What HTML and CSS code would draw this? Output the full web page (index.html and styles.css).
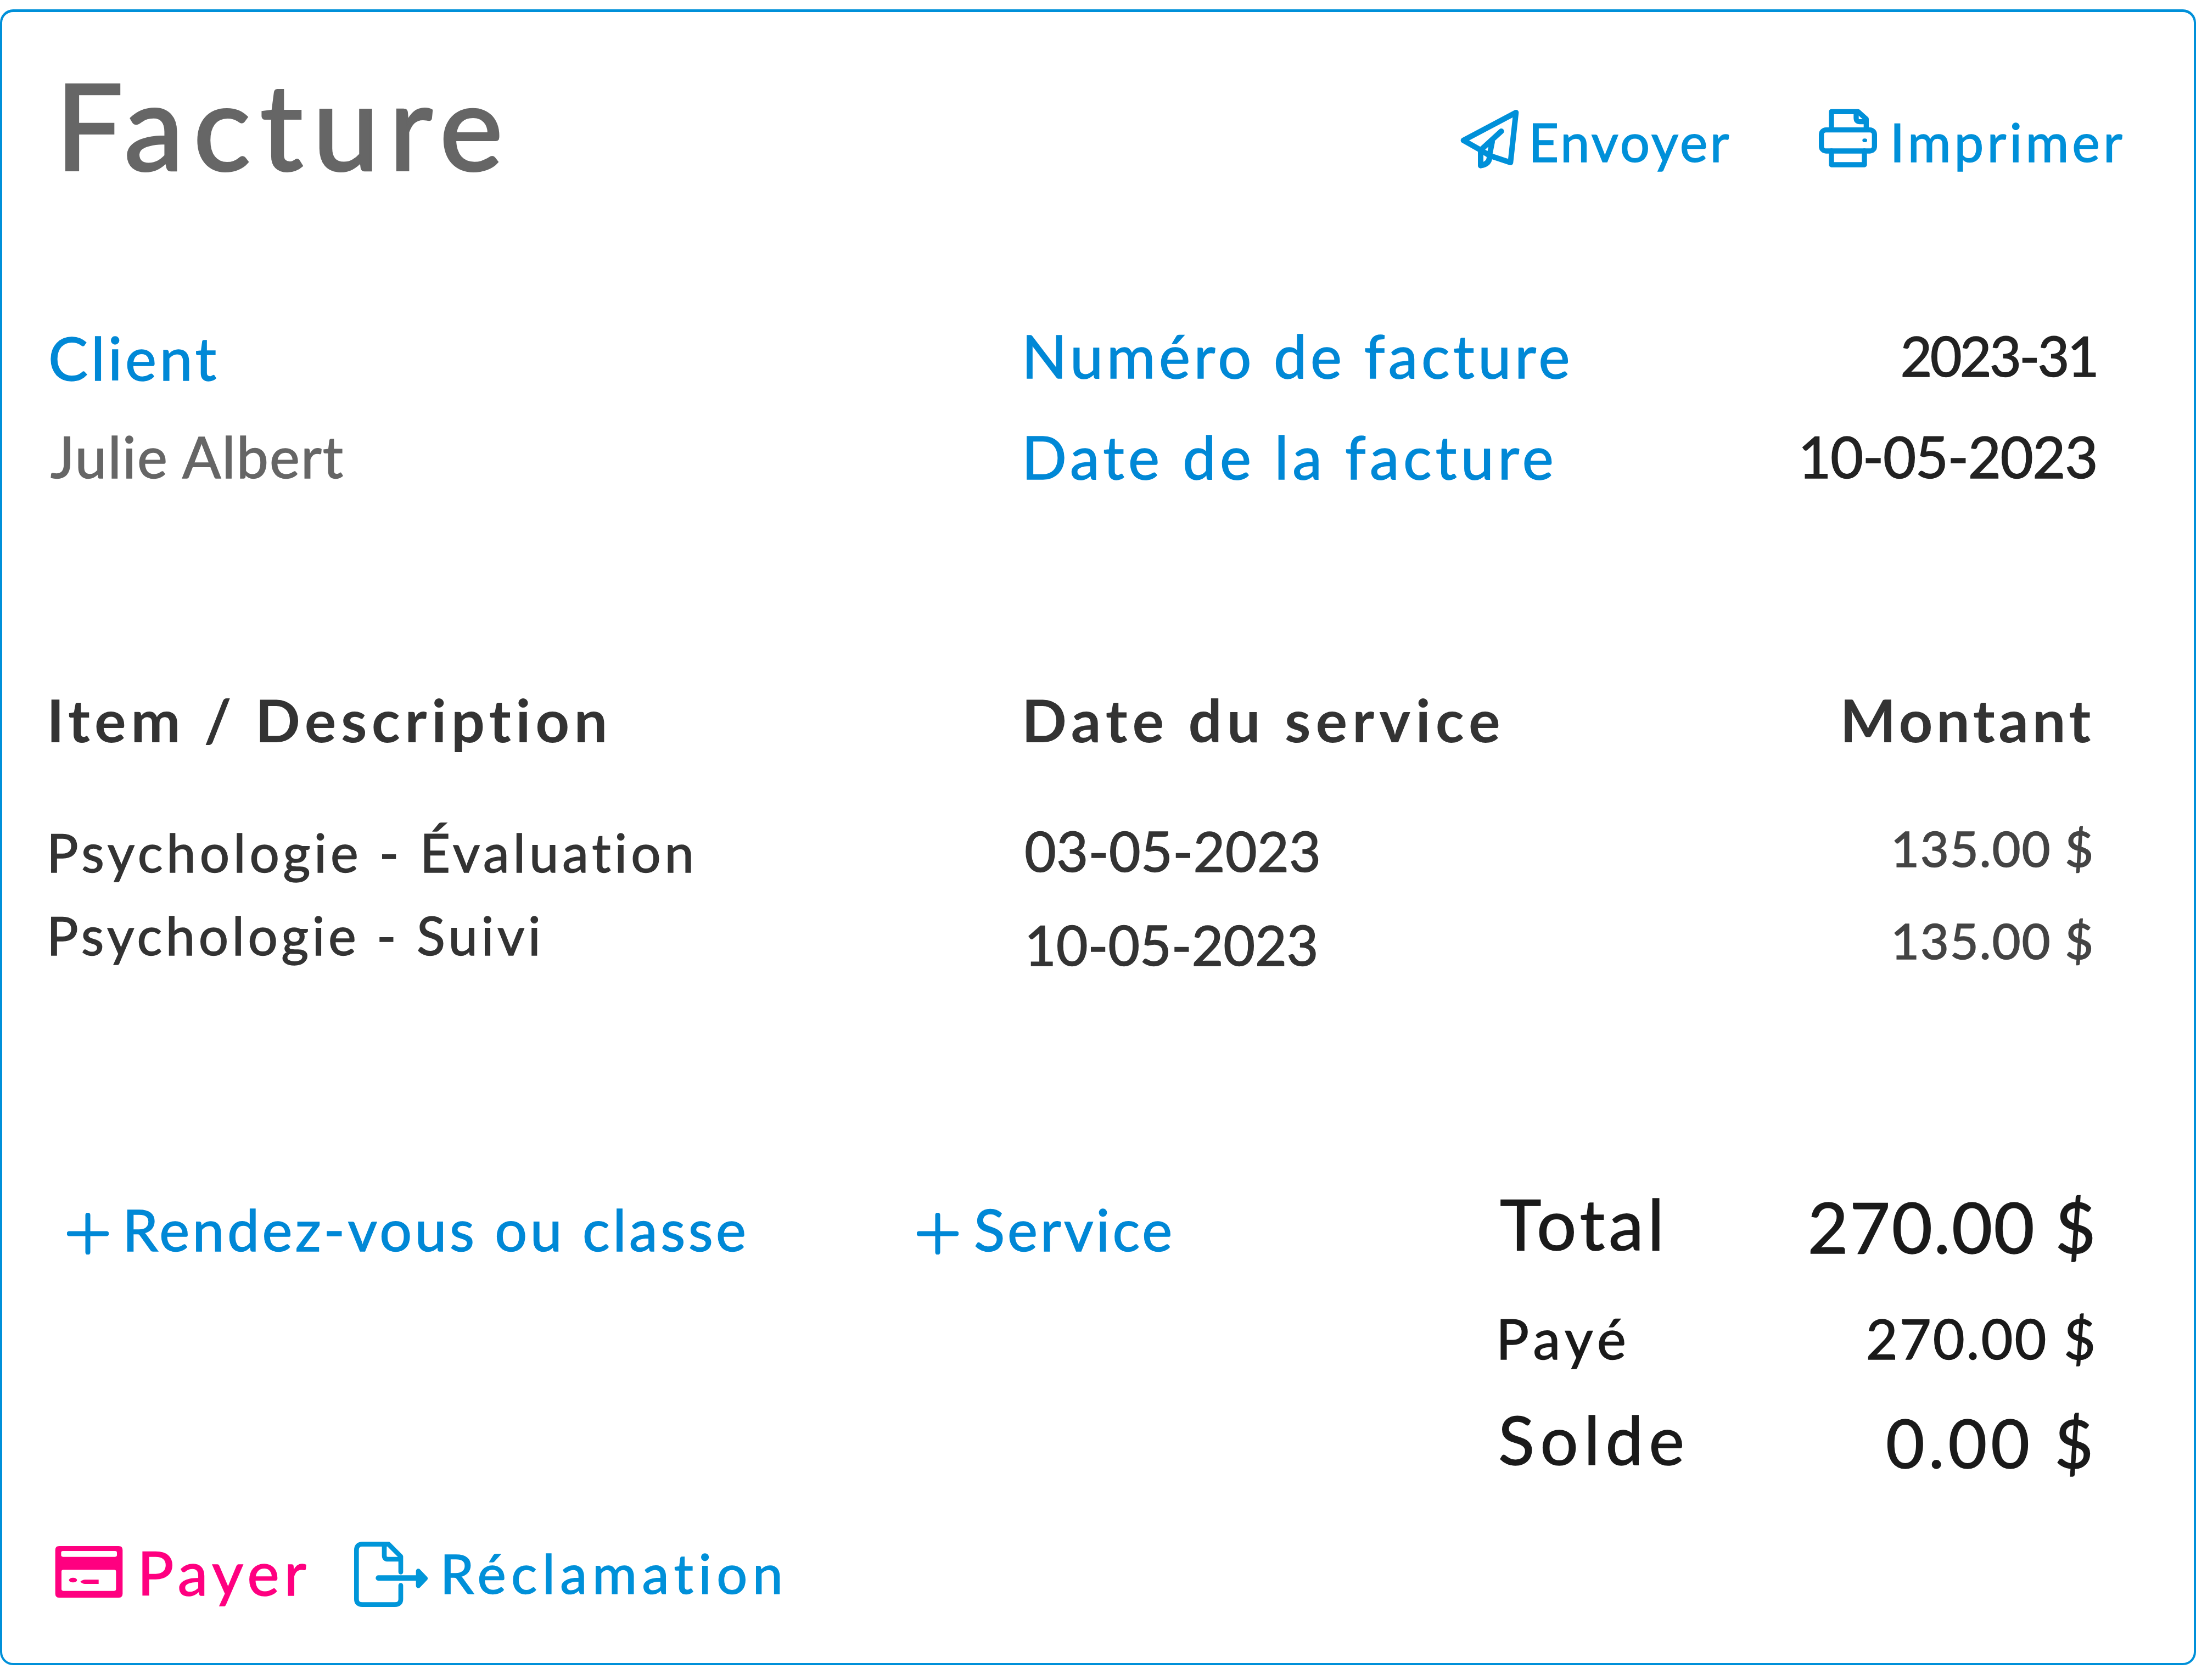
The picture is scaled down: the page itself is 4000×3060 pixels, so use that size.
FILE: index.html
```html
<!DOCTYPE html>
<html lang="fr">
<head>
<meta charset="utf-8">
<title>Facture</title>
<link rel="stylesheet" href="styles.css">
</head>
<body>
<main class="card">
  <header class="head">
    <h1 class="title">Facture</h1>
    <nav class="tools">
      <a class="tool">
        <svg class="ico-130" viewBox="0 0 390 390" fill="none" stroke="#0090d9" stroke-width="30" stroke-linecap="round" stroke-linejoin="round"><path d="M325 45 38 197l94 53v85q53-10 48-55l115 38z"/><path d="M245 147 132 250M195 205l-15 75-48-30"/></svg>
        <span class="tool-text t-send">Envoyer</span>
      </a>
      <a class="tool">
        <svg class="ico-130" viewBox="0 0 390 390" fill="none" stroke="#0090d9" stroke-width="28" stroke-linecap="round" stroke-linejoin="round"><path d="M105 135V40h145l45 40v55"/><path d="M240 55v20q0 20 20 20h30" stroke-width="28"/><rect x="50" y="140" width="290" height="115" rx="25"/><path d="M105 255v75h180v-75"/><ellipse cx="287" cy="197" rx="13" ry="10" fill="#0090d9" stroke="none"/></svg>
        <span class="tool-text t-print">Imprimer</span>
      </a>
    </nav>
  </header>

  <section class="info grid">
    <div class="client">
      <div class="label l-client">Client</div>
      <div class="client-name">Julie Albert</div>
    </div>
    <div>
      <div class="label l-num">Numéro de facture</div>
      <div class="label l-date">Date de la facture</div>
    </div>
    <div class="right">
      <div class="meta m-num">2023-31</div>
      <div class="meta m-date">10-05-2023</div>
    </div>
  </section>

  <section class="table grid">
    <div>
      <div class="th th-item">Item / Description</div>
      <div class="items">
        <div class="item i-eval">Psychologie - Évaluation</div>
        <div class="item i-suivi">Psychologie - Suivi</div>
      </div>
    </div>
    <div>
      <div class="th th-date">Date du service</div>
      <div class="dates">
        <div class="date d-a">03-05-2023</div>
        <div class="date d-b">10-05-2023</div>
      </div>
    </div>
    <div class="right">
      <div class="th th-amt">Montant</div>
      <div class="amts">
        <div class="amt">135.00 $</div>
        <div class="amt">135.00 $</div>
      </div>
    </div>
  </section>

  <section class="summary">
    <div class="add add-rdv">
      <svg class="plus" viewBox="0 0 76 76" fill="none" stroke="#0088d6" stroke-width="9" stroke-linecap="round"><path d="M38 4v68M4 38h68"/></svg>
      <span class="add-text t-rdv">Rendez-vous ou classe</span>
    </div>
    <div class="add add-svc">
      <svg class="plus" viewBox="0 0 76 76" fill="none" stroke="#0088d6" stroke-width="9" stroke-linecap="round"><path d="M38 4v68M4 38h68"/></svg>
      <span class="add-text t-svc">Service</span>
    </div>
    <div class="totals">
      <div class="tot tot-total"><span class="tot-label">Total</span><span class="tot-val">270.00 $</span></div>
      <div class="tot tot-paid"><span class="tot-label">Payé</span><span class="tot-val">270.00 $</span></div>
      <div class="tot tot-bal"><span class="tot-label">Solde</span><span class="tot-val">0.00 $</span></div>
    </div>
  </section>

  <footer class="foot">
    <a class="foot-link">
      <svg class="ico-pay" viewBox="0 0 450 390"><path fill="#ff0080" fill-rule="evenodd" d="M60 48h324q22 0 22 22v238q0 22-22 22H60q-22 0-22-22V70q0-22 22-22zM80 75q-10 0-10 10v12q0 10 10 10h285q10 0 10-10V85q0-10-10-10zM82 178q-10 0-10 10v95q0 10 10 10h278q10 0 10-10v-95q0-10-10-10z"/><ellipse cx="135" cy="234" rx="22" ry="13" fill="#ff0080"/><path fill="#ff0080" d="M175 243q12-11 25-11h75v23h-75q-13 0-25-12z"/></svg>
      <span class="pay-text">Payer</span>
    </a>
    <a class="foot-link claim">
      <svg class="ico-doc" viewBox="0 0 450 450" fill="none" stroke="#0096d9" stroke-width="26" stroke-linecap="round" stroke-linejoin="round"><path d="M282 190v-85l-67-67H72q-32 0-32 32v268q0 30 32 30h178q32 0 32-30v-75"/><path d="M192 45v55q0 20 20 20h68"/><path d="M160 223h215" stroke-width="30"/><path d="M378 185l38 40-38 40z" fill="#0096d9"/></svg>
      <span class="claim-text">Réclamation</span>
    </a>
  </footer>
</main>
</body>
</html>
```
FILE: styles.css
```css
* { box-sizing: border-box; }
html, body { margin: 0; padding: 0; background: #fff; }
body { width: 4000px; height: 3060px; padding-top: 17px; font-family: "Lato", "Liberation Sans", sans-serif; font-weight: 400; -webkit-text-stroke: 1.5px currentColor; }
.card { width: 4000px; height: 3016px; border: 4px solid #0090d9; border-top-width: 5px; border-radius: 24px; padding-left: 84px; color: #333; }

.head { display: flex; justify-content: space-between; height: 533px; padding-right: 124px; }
.title { margin: 54px 0 0 13px; font-size: 218px; line-height: 300px; font-weight: 400; color: #666; letter-spacing: 17.5px; -webkit-text-stroke: 4px #666; }
.tools { display: flex; gap: 148px; margin-top: 168px; }
.tool { display: flex; color: #0090d9; }
.tool-text { font-size: 96px; line-height: 130px; padding-top: 3px; }
.t-send { margin-left: 1px; letter-spacing: 4px; }
.t-print { margin-left: 11px; letter-spacing: 6px; }
.ico-130 { width: 130px; height: 130px; flex: none; }

.grid { display: grid; grid-template-columns: 1773px 1fr auto; }
.right { text-align: right; }
.info { padding-right: 176px; }
.label { font-size: 108px; line-height: 184px; color: #0088d6; letter-spacing: 6.5px; }
.l-date { letter-spacing: 7.3px; }
.l-client { padding-top: 8px; height: 184px; line-height: 176px; letter-spacing: 5.5px; }
.client-name { font-size: 104px; line-height: 184px; color: #666; letter-spacing: 2px; margin-left: 4px; }
.meta { font-size: 104px; line-height: 184px; color: #222; }
.m-num { font-size: 100px; letter-spacing: -3.8px; }
.m-date { letter-spacing: -1.5px; }

.table { margin-top: 295px; padding-right: 181px; }
.th { font-size: 108px; line-height: 184px; font-weight: 700; color: #333; -webkit-text-stroke: 0; }
.th-item { letter-spacing: 8.4px; margin-left: -3px; }
.th-date { letter-spacing: 9px; }
.th-amt { letter-spacing: 6.5px; }
.items { padding-top: 74px; margin-left: -3px; }
.item { font-size: 96px; line-height: 151px; }
.i-eval { letter-spacing: 6.8px; }
.i-suivi { letter-spacing: 6.4px; }
.dates { padding-top: 62px; padding-left: 5px; }
.date { font-size: 100px; line-height: 171px; }
.d-a { letter-spacing: 0.2px; }
.d-b { letter-spacing: -0.3px; }
.amts { padding-top: 58px; }
.amt { font-size: 90px; line-height: 168px; letter-spacing: 1.7px; color: #444; }

.summary { display: flex; margin-top: 342px; padding-right: 176px; }
.add { display: flex; align-items: flex-start; color: #0088d6; padding-top: 11px; }
.add-rdv { width: 1582px; padding-left: 34px; }
.add-svc { width: 1062px; }
.plus { width: 76px; height: 76px; margin-top: 50px; flex: none; }
.add-text { font-size: 104px; line-height: 160px; }
.t-rdv { letter-spacing: 5.4px; margin-left: 25px; }
.t-svc { letter-spacing: 5px; margin-left: 28px; }
.totals { flex: 1; color: #1a1a1a; }
.tot { display: flex; justify-content: space-between; line-height: 160px; }
.tot-total { font-size: 128px; }
.tot-total .tot-label { letter-spacing: 7px; }
.tot-total .tot-val { letter-spacing: 2.4px; margin-top: 6px; }
.tot-paid { font-size: 100px; margin-top: 43px; }
.tot-paid .tot-label { letter-spacing: 9px; margin-left: -7px; }
.tot-paid .tot-val { letter-spacing: 3px; }
.tot-bal { font-size: 122px; margin-top: 24px; }
.tot-bal .tot-label { letter-spacing: 10.6px; margin-left: -3px; }
.tot-bal .tot-val { letter-spacing: 7px; margin-top: 6px; }

.foot { display: flex; margin-top: 93px; }
.foot-link { display: flex; }
.ico-pay { width: 150px; height: 130px; flex: none; }
.ico-doc { width: 150px; height: 150px; flex: none; }
.pay-text { font-size: 111px; line-height: 130px; color: #ff0080; margin: -2px 0 0 12px; letter-spacing: 8.6px; }
.claim { margin-left: 70px; }
.claim-text { font-size: 99px; line-height: 130px; color: #0090d9; margin-left: 15px; letter-spacing: 9.3px; }
```
